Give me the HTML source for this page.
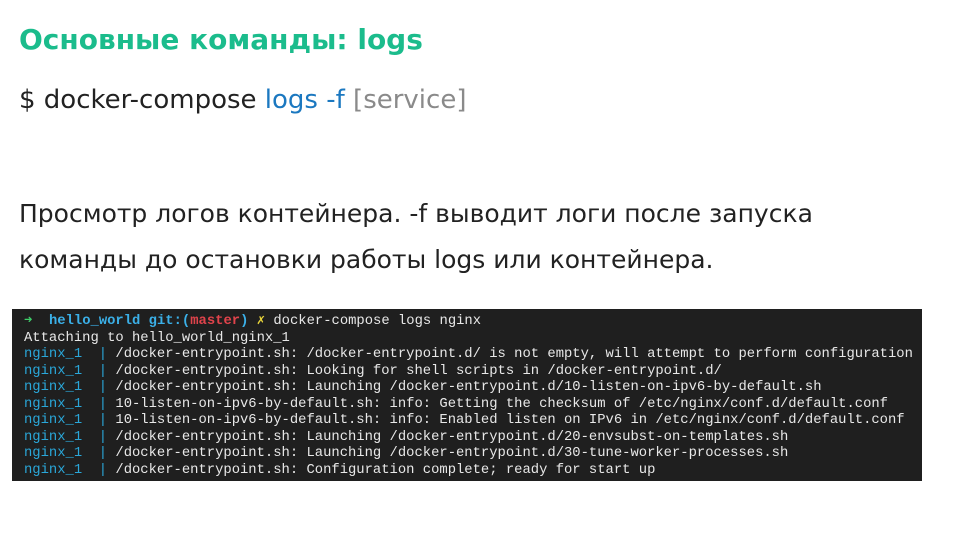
<!DOCTYPE html>
<html><head><meta charset="utf-8"><style>
body{margin:0;width:953px;height:535px;background:#fff;position:relative;overflow:hidden;font-family:"DejaVu Sans","Liberation Sans",sans-serif;}
.t{position:absolute;left:19px;top:26px;font-size:28px;line-height:28px;font-weight:bold;color:#1bbc8c;white-space:nowrap;}
.c{position:absolute;left:19px;top:87px;font-size:26px;line-height:26px;color:#222;white-space:nowrap;}
.b{position:absolute;left:19px;font-size:25px;line-height:26px;color:#222;white-space:nowrap;}
.term{position:absolute;left:12px;top:309px;width:910px;height:172px;background:#1f1f1f;overflow:hidden;}
.term pre{margin:0;position:absolute;left:12px;top:4px;font-family:"Liberation Mono","DejaVu Sans Mono",monospace;font-size:13.85px;line-height:16.5px;color:#e8e8e8;}
.cy{color:#2aa7d9}.bl{color:#3bb0e8;font-weight:bold}.rd{color:#e0434b;font-weight:bold}.gr{color:#3fcf6a}.yl{color:#e8d43a}
</style></head><body>
<div class="t">Основные команды: logs</div>
<div class="c">$ docker-compose <span style="color:#1b78c0">logs -f</span> <span style="color:#8a8a8a">[service]</span></div>
<div class="b" style="top:201px">Просмотр логов контейнера. -f выводит логи после запуска</div>
<div class="b" style="top:247px">команды до остановки работы logs или контейнера.</div>
<div class="term"><pre><span class="gr">➜</span>  <span class="bl">hello_world</span> <span class="bl">git:(</span><span class="rd">master</span><span class="bl">)</span> <span class="yl">✗</span> docker-compose logs nginx
Attaching to hello_world_nginx_1
<span class="cy">nginx_1  |</span> /docker-entrypoint.sh: /docker-entrypoint.d/ is not empty, will attempt to perform configuration
<span class="cy">nginx_1  |</span> /docker-entrypoint.sh: Looking for shell scripts in /docker-entrypoint.d/
<span class="cy">nginx_1  |</span> /docker-entrypoint.sh: Launching /docker-entrypoint.d/10-listen-on-ipv6-by-default.sh
<span class="cy">nginx_1  |</span> 10-listen-on-ipv6-by-default.sh: info: Getting the checksum of /etc/nginx/conf.d/default.conf
<span class="cy">nginx_1  |</span> 10-listen-on-ipv6-by-default.sh: info: Enabled listen on IPv6 in /etc/nginx/conf.d/default.conf
<span class="cy">nginx_1  |</span> /docker-entrypoint.sh: Launching /docker-entrypoint.d/20-envsubst-on-templates.sh
<span class="cy">nginx_1  |</span> /docker-entrypoint.sh: Launching /docker-entrypoint.d/30-tune-worker-processes.sh
<span class="cy">nginx_1  |</span> /docker-entrypoint.sh: Configuration complete; ready for start up
</pre></div>
</body></html>
